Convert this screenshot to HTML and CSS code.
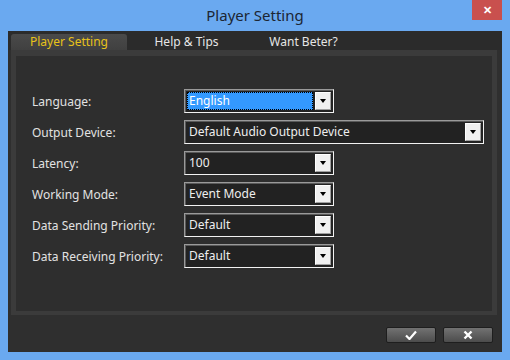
FILE: index.html
```html
<!DOCTYPE html>
<html lang="en">

<head>
    <meta charset="UTF-8">
    <title>Player Setting</title>
    <link rel="stylesheet" href="styles.css">
</head>

<body>
    <div class="window">
        <div class="titlebar">
            <span class="title">Player Setting</span>
            <button class="close" type="button">&#x2715;</button>
        </div>

        <div class="client">
            <div class="tabs">
                <div class="tab active">Player Setting</div>
                <div class="tab">Help &amp; Tips</div>
                <div class="tab">Want Beter?</div>
            </div>

            <div class="panel">
                <div class="panel-inner">
                    <div class="row">
                        <label>Language:</label>
                        <div class="combo">
                            <span class="value selected">English</span>
                            <span class="arrow"></span>
                        </div>
                    </div>
                    <div class="row">
                        <label>Output Device:</label>
                        <div class="combo wide">
                            <span class="value">Default Audio Output Device</span>
                            <span class="arrow"></span>
                        </div>
                    </div>
                    <div class="row">
                        <label>Latency:</label>
                        <div class="combo">
                            <span class="value">100</span>
                            <span class="arrow"></span>
                        </div>
                    </div>
                    <div class="row">
                        <label>Working Mode:</label>
                        <div class="combo">
                            <span class="value">Event Mode</span>
                            <span class="arrow"></span>
                        </div>
                    </div>
                    <div class="row">
                        <label>Data Sending Priority:</label>
                        <div class="combo">
                            <span class="value">Default</span>
                            <span class="arrow"></span>
                        </div>
                    </div>
                    <div class="row">
                        <label>Data Receiving Priority:</label>
                        <div class="combo">
                            <span class="value">Default</span>
                            <span class="arrow"></span>
                        </div>
                    </div>
                </div>
            </div>

            <div class="footer">
                <button class="btn" type="button">
                    <svg width="12" height="10" viewBox="0 0 12 10">
                        <path d="M1 5.5 L4.5 9 L11 1.5" fill="none" stroke="#fff" stroke-width="2.2" />
                    </svg>
                </button>
                <button class="btn" type="button">
                    <svg width="10" height="10" viewBox="0 0 10 10">
                        <path d="M1.5 1.5 L8.5 8.5 M8.5 1.5 L1.5 8.5" fill="none" stroke="#fff" stroke-width="2.4" />
                    </svg>
                </button>
            </div>
        </div>
    </div>
</body>

</html>
```

FILE: styles.css
```css
/* Reset */
* {
    margin: 0;
    padding: 0;
    box-sizing: border-box;
}

body {
    width: 510px;
    height: 360px;
    overflow: hidden;
    font-family: 'Noto Sans', 'Open Sans', sans-serif;
    font-size: 12px;
}

.window {
    width: 510px;
    height: 360px;
    background: #6aa9f0;
    padding: 0 8px 8px;
    display: flex;
    flex-direction: column;
    position: relative;
}

/* Title bar */
.titlebar {
    height: 31px;
    display: flex;
    justify-content: center;
    align-items: center;
}

.title {
    font-size: 15px;
    color: #1c2633;
    padding-bottom: 1px;
}

.close {
    position: absolute;
    top: 0;
    right: 8px;
    width: 30px;
    height: 20px;
    border: none;
    background: #c9504e;
    color: #fff;
    font-size: 11px;
    font-weight: bold;
    display: flex;
    justify-content: center;
    align-items: center;
}

/* Client area */
.client {
    flex: 1;
    background: #2f2f2f;
    display: flex;
    flex-direction: column;
}

.tabs {
    height: 19px;
    padding: 3px 0 0 3px;
    display: flex;
    background: #2b2b2b;
}

.tab {
    width: 117px;
    text-align: center;
    color: #e6e6e6;
    font-size: 12px;
    line-height: 16px;
}

.tab.active {
    width: 116px;
    margin-right: 1px;
    color: #e8c21a;
    background: linear-gradient(#4a4a4a, #404040);
    border-radius: 3px 3px 0 0;
}

.panel {
    height: 265px;
    margin: 0 5px 0 3px;
    padding: 6px 5px 4px 5px;
    background: #3b3b3b;
}

.panel-inner {
    height: 100%;
    background: #2e2e2e;
    padding: 33px 0 0 16px;
    display: flex;
    flex-direction: column;
    gap: 7px;
}

.row {
    display: flex;
    align-items: center;
    height: 24px;
}

.row label {
    width: 152px;
    color: #e2e2e2;
}

/* Combo boxes */
.combo {
    width: 150px;
    height: 24px;
    display: flex;
    align-items: center;
    padding: 2px;
    background: #222;
    border: 1px solid;
    border-color: #9a9a9a #f2f2f2 #f2f2f2 #9a9a9a;
    box-shadow: inset 1px 1px 0 #5a5a5a;
}

.combo.wide {
    width: 300px;
}

.combo .value {
    flex: 1;
    height: 18px;
    line-height: 18px;
    padding-left: 2px;
    color: #eee;
    font-size: 12px;
}

.combo .value.selected {
    background: #3399ff;
    color: #fff;
    outline: 1px dotted #000;
    outline-offset: -1px;
}

.combo .arrow {
    width: 16px;
    height: 18px;
    margin-left: 2px;
    background: #f0f0f0;
    border: 1px solid;
    border-color: #fff #a0a0a0 #a0a0a0 #fff;
    position: relative;
}

.combo .arrow:after {
    content: '';
    position: absolute;
    left: 4px;
    top: 6px;
    border-left: 3.5px solid transparent;
    border-right: 3.5px solid transparent;
    border-top: 4px solid #000;
}

/* Footer */
.footer {
    flex: 1;
    display: flex;
    justify-content: flex-end;
    align-items: flex-end;
    gap: 7px;
    padding: 0 9px 9px 0;
}

.btn {
    width: 50px;
    height: 16px;
    border: 1px solid #1e1e1e;
    border-radius: 2px;
    background: linear-gradient(#727272, #4c4c4c);
    display: flex;
    justify-content: center;
    align-items: center;
}
```
